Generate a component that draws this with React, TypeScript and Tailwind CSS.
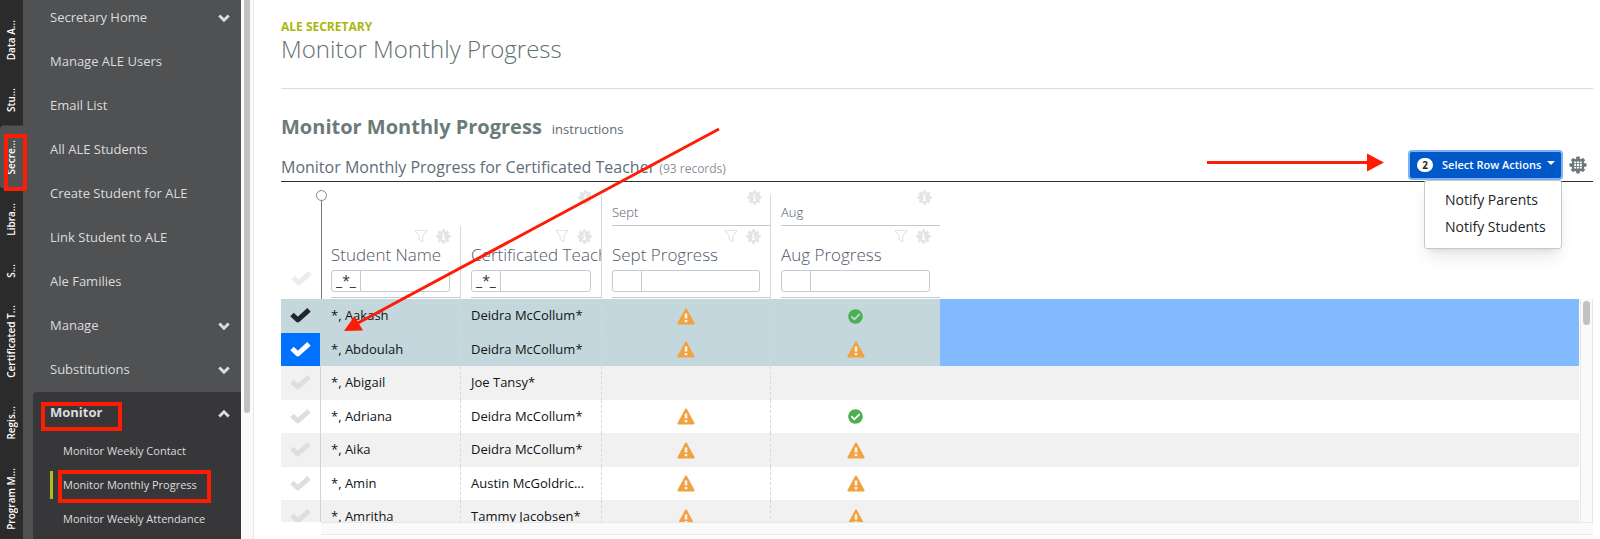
import React from "react";
import { FaCheckCircle } from "react-icons/fa";

type Status = "warn" | "ok" | "";

type Student = {
  name: string;
  teacher: string;
  sept: Status;
  aug: Status;
  selected?: boolean;
  active?: boolean;
};

const railTabs = [
  "Data A...",
  "Stu...",
  "Secre...",
  "Libra...",
  "S...",
  "Certificated T...",
  "Regis...",
  "Program M...",
];

const menuItems = [
  { label: "Secretary Home", expandable: true },
  { label: "Manage ALE Users" },
  { label: "Email List" },
  { label: "All ALE Students" },
  { label: "Create Student for ALE" },
  { label: "Link Student to ALE" },
  { label: "Ale Families" },
  { label: "Manage", expandable: true },
  { label: "Substitutions", expandable: true },
];

const monitorItems = [
  "Monitor Weekly Contact",
  "Monitor Monthly Progress",
  "Monitor Weekly Attendance",
];

const students: Student[] = [
  { name: "*, Aakash", teacher: "Deidra McCollum*", sept: "warn", aug: "ok", selected: true },
  { name: "*, Abdoulah", teacher: "Deidra McCollum*", sept: "warn", aug: "warn", selected: true, active: true },
  { name: "*, Abigail", teacher: "Joe Tansy*", sept: "", aug: "" },
  { name: "*, Adriana", teacher: "Deidra McCollum*", sept: "warn", aug: "ok" },
  { name: "*, Aika", teacher: "Deidra McCollum*", sept: "warn", aug: "warn" },
  { name: "*, Amin", teacher: "Austin McGoldric...", sept: "warn", aug: "warn" },
  { name: "*, Amritha", teacher: "Tammy Jacobsen*", sept: "warn", aug: "warn" },
];

const Check = ({ className }: { className: string }) => (
  <svg viewBox="0 0 21 16" className={`h-4 w-[21px] ${className}`} fill="none" stroke="currentColor" strokeWidth="5" strokeLinejoin="round" aria-hidden="true">
    <path d="M2 6.5 7.8 12 19 1.8" />
  </svg>
);

const Chevron = ({ up }: { up?: boolean }) => (
  <svg viewBox="0 0 12 9" className="h-[9px] w-3" fill="none" stroke="currentColor" strokeWidth="3" aria-hidden="true">
    <path d={up ? "M1.3 7.5 6 2.8 10.7 7.5" : "M1.3 1.5 6 6.2 10.7 1.5"} />
  </svg>
);

const Gear = ({ children, className }: { children: React.ReactNode; className: string }) => (
  <svg viewBox="0 0 18 18" className={className} fill="currentColor" aria-hidden="true">
    <circle cx="9" cy="9" r="6.6" />
    {[0, 45, 90, 135].map((angle) => (
      <rect key={angle} x="7.2" y="0.4" width="3.6" height="17.2" rx="0.8" transform={`rotate(${angle} 9 9)`} />
    ))}
    {children}
  </svg>
);

const InfoGear = () => (
  <Gear className="h-[15px] w-[15px] text-[#e3e5e7]">
    <path d="M7.2 7.6h2.7v4.2h.9v1.4H7.2v-1.4h.8V9h-.8z" fill="#fff" />
    <rect x="7.9" y="4.6" width="2" height="2" fill="#fff" />
  </Gear>
);

const GridGear = () => (
  <Gear className="h-[18px] w-[18px] text-[#6c777d]">
    <path
      d="M5.2 5.4h2v1.8h-2zM8 5.4h2v1.8H8zM10.800 5.400h2v1.800h-2zM5.2 8.1h2v1.8h-2zM8 8.1h2v1.8H8zM10.8 8.1h2v1.8h-2zM5.2 10.8h2v1.800h-2zM8 10.8h2v1.8H8zM10.8 10.8h2v1.8h-2z"
      fill="#fff"
    />
  </Gear>
);

const Funnel = () => (
  <svg viewBox="0 0 14 14" className="h-[14px] w-[14px]" fill="none" stroke="#e3e5e7" strokeWidth="1.2" strokeLinejoin="round" aria-hidden="true">
    <path d="M1 1.5h12L8.8 7v5.8L5.2 10.4V7z" />
  </svg>
);

const StatusIcon = ({ status }: { status: Status }) => {
  if (status === "ok") {
    return <FaCheckCircle className="mx-auto h-[15px] w-[15px] text-[#4caf50]" title="Complete" />;
  }
  if (status === "warn") {
    return (
      <svg viewBox="0 0 18 17" className="mx-auto h-[17px] w-[18px]" role="img" aria-label="Incomplete">
        <path d="M8.3.8q.7-1 1.4 0L17.5 15q.3 1.3-.8 1.4H1.3Q.2 16.3.5 15z" fill="#f0a243" />
        <path d="M7.7 5.6h2.6v5H7.7zM7.7 12h2.6v2.2H7.7z" fill="#fff" fillOpacity="0.85" />
      </svg>
    );
  }
  return null;
};

const ColumnHeader = ({ label, wildcard }: { label: string; wildcard?: boolean }) => (
  <th scope="col" className="h-[73px] overflow-hidden border-r border-[#d5d9dd] p-0 pl-[10px] align-top font-light last:border-r-0">
    <div className="h-[72px] border-b border-[#c3c8cd] pt-[3px]">
      <div className="flex justify-end gap-2 pr-[9px]">
        <Funnel />
        <InfoGear />
      </div>
      <div className="overflow-hidden text-[17px] leading-[22px] whitespace-nowrap text-[#4d5a68]">{label}</div>
      <div className="mt-1 mr-[10px] flex h-[22px] rounded-[3px] border border-[#c5cad3]">
        <button type="button" aria-label={`${label} match type`} className="w-[29px] border-r border-[#c5cad3] text-sm leading-5 font-normal text-[#333]">
          {wildcard ? "_*_" : ""}
        </button>
        <input type="text" aria-label={`Filter ${label}`} className="min-w-0 flex-1 px-1 text-xs outline-none" />
      </div>
    </div>
  </th>
);

const GroupHeader = ({ label, last }: { label?: string; last?: boolean }) => (
  <th scope="colgroup" className="h-11 p-0 pt-[13px] align-top font-light">
    <div className={`flex h-[31px] flex-col pl-[10px] ${last ? "" : "border-r border-[#d5d9dd]"}`}>
      <div className={`flex flex-1 flex-col ${label ? "border-b border-[#c3c8cd]" : ""}`}>
        <div className="-mt-[5px] flex justify-end pr-2">
          <InfoGear />
        </div>
        {label && <div className="text-left text-[13px] leading-[14px] text-[#4d5a68]">{label}</div>}
      </div>
    </div>
  </th>
);

const StudentRow = ({ student }: { student: Student }) => {
  const { name, teacher, sept, aug, selected, active } = student;
  const cell = "overflow-hidden border-r border-dashed border-[#d5d9dd] p-0 pl-[10px] whitespace-nowrap";
  const iconCell = "border-r border-dashed border-[#d5d9dd] p-0";
  const tick = active ? "text-white" : selected ? "text-[#212529]" : "text-[#dedede]";

  return (
    <tr className={`odd:h-[34px] even:h-[33px] ${selected ? "bg-[#c3d7dc]" : "odd:bg-[#f1f1f1] even:bg-white"}`}>
      <td className={`relative border-r border-[#d0d3d5] p-0 ${active ? "bg-[#0070ff]" : ""}`}>
        <label className="flex justify-center">
          <input type="checkbox" defaultChecked={selected} className="sr-only" aria-label={`Select ${name}`} />
          <Check className={tick} />
        </label>
      </td>
      <td className={cell}>{name}</td>
      <td className={cell}>{teacher}</td>
      <td className={iconCell}><StatusIcon status={sept} /></td>
      <td className="p-0"><StatusIcon status={aug} /></td>
      <td className={selected ? "bg-[#82baff] p-0" : "p-0"} />
    </tr>
  );
};

const Sidebar = () => (
  <aside className="flex shrink-0 overflow-hidden">
    {/* Vertical module tabs */}
    <nav aria-label="Modules" className="flex w-[23px] flex-col bg-[#2b2b2b] pt-[6px]">
      {railTabs.map((tab) => (
        <a
          key={tab}
          href="#"
          className={`flex w-[23px] shrink-0 rotate-180 items-center justify-center px-[14px] text-[10px] font-semibold whitespace-nowrap text-white [writing-mode:vertical-rl] ${
            tab === "Secre..." ? "rounded-r-sm bg-[#505153]" : ""
          }`}
        >
          {tab}
        </a>
      ))}
    </nav>

    {/* Module menu */}
    <nav aria-label="ALE Secretary" className="w-[218px] overflow-hidden bg-[#505153]">
      <ul className="-mt-1 text-[13px] text-[#dcdcdc]">
        {menuItems.map((item) => (
          <li key={item.label}>
            <a href="#" className="flex h-11 items-center justify-between pr-[11px] pl-[27px]">
              {item.label}
              {item.expandable && <Chevron />}
            </a>
          </li>
        ))}
        <li className="ml-[10px] h-screen rounded-tl bg-[#373739]">
          <a href="#" className="flex h-[42px] items-center justify-between pr-[11px] pl-[17px] font-bold">
            Monitor
            <Chevron up />
          </a>
          <ul className="text-[11px]">
            {monitorItems.map((label) => (
              <li key={label} className="flex h-[34px] items-center pl-[17px]">
                <a
                  href="#"
                  className={`flex h-7 items-center border-l-3 pl-[10px] ${
                    label === "Monitor Monthly Progress" ? "border-[#b0bb1e]" : "border-transparent"
                  }`}
                >
                  {label}
                </a>
              </li>
            ))}
          </ul>
        </li>
      </ul>
    </nav>

    <div className="w-[13px] border-r border-[#e8e8e8] bg-[#fafafa] px-[3px]">
      <div className="h-[413px] rounded-b-full bg-[#c1c1c1]" />
    </div>
  </aside>
);

const RowActions = () => (
  <div className="relative">
    <button type="button" className="flex h-[26px] w-[151px] items-center rounded-[2px] bg-[#0058c9] pr-[6px] pl-[7px] text-[11px] font-semibold whitespace-nowrap text-white ring-2 ring-[#7fb2f5]">
      <span className="mr-[9px] flex h-[14px] w-4 items-center justify-center rounded-full bg-white text-[10px] font-bold text-[#212529]">2</span>
      Select Row Actions
      <span className="mb-1 ml-auto border-x-4 border-t-4 border-x-transparent border-t-white" />
    </button>
    <ul className="absolute top-7 -right-px z-10 w-[138px] rounded-[3px] border border-[#c8c8c8] bg-white pt-[5px] pb-2 text-sm text-[#212529] shadow-lg">
      <li><a href="#" className="block pl-5 leading-[27px]">Notify Parents</a></li>
      <li><a href="#" className="block pl-5 leading-[27px]">Notify Students</a></li>
    </ul>
  </div>
);

/* Callouts drawn on top of the page */
const Callouts = () => (
  <svg className="pointer-events-none absolute top-0 left-0 z-20 h-full w-full" fill="none" stroke="#ff1c05" aria-hidden="true">
    <g strokeWidth="4">
      <rect x="6" y="136" width="19" height="53" />
      <rect x="43" y="404" width="77" height="25" />
      <rect x="60" y="472" width="149" height="29" />
    </g>
    <path d="M719 129 358 323M1207 162.5h162" strokeWidth="3" />
    <path d="M344 331 354.5 316 363 330.5zM1384 162.5l-17-9v18z" fill="#ff1c05" stroke="none" />
  </svg>
);

export default function App() {
  return (
    <div className="relative flex h-screen overflow-hidden bg-white font-['Open_Sans',sans-serif]">
      <Sidebar />

      <main className="flex min-w-0 flex-1 flex-col pr-[7px] pb-1 pl-[27px]">
        <header className="border-b border-[#dcdcdc] pt-[19px] pb-[25px]">
          <p className="text-xs leading-4 font-bold text-[#a8b710]">ALE SECRETARY</p>
          <h1 className="text-2xl leading-7 font-light text-[#61706f]">Monitor Monthly Progress</h1>
        </header>

        <div className="mt-6 flex items-baseline gap-[10px]">
          <h2 className="text-xl leading-7 font-bold text-[#6b7b7b]">Monitor Monthly Progress</h2>
          <a href="#" className="text-[13px] text-[#5d6b70]">instructions</a>
        </div>

        <div className="flex h-[41px] items-end justify-between border-b border-[#333] pb-[3px]">
          <h3 className="text-base leading-[22px] text-[#5f6d7a]">
            Monitor Monthly Progress for Certificated Teacher <small className="text-xs text-[#8b9299]">(93 records)</small>
          </h3>
          <div className="flex items-center gap-2 pr-[6px]">
            <RowActions />
            <button type="button" aria-label="Table settings"><GridGear /></button>
          </div>
        </div>

        <div className="flex min-h-0 flex-1">
          <div className="min-w-0 flex-1 overflow-hidden">
            <table className="w-full table-fixed border-separate border-spacing-0 text-left text-[13px] text-[#111417]">
              <colgroup>
                <col className="w-10" />
                <col className="w-[140px]" />
                <col className="w-[141px]" />
                <col className="w-[169px]" />
                <col className="w-[169px]" />
                <col />
              </colgroup>
              <thead>
                <tr>
                  <th rowSpan={2} className="relative p-0 pb-3 align-bottom">
                    <label className="flex justify-center">
                      <input type="checkbox" className="sr-only" aria-label="Select all" />
                      <Check className="text-[#ececee]" />
                    </label>
                    {/* Frozen column handle */}
                    <span className="absolute top-[18px] -right-px bottom-0 w-px bg-[#777d85]" />
                    <span className="absolute top-2 -right-[6px] h-[11px] w-[11px] rounded-full border border-[#7d8794] bg-white" />
                  </th>
                  <th className="h-11 p-0" />
                  <GroupHeader />
                  <GroupHeader label="Sept" />
                  <GroupHeader label="Aug" last />
                  <th rowSpan={2} className="p-0" />
                </tr>
                <tr>
                  <ColumnHeader label="Student Name" wildcard />
                  <ColumnHeader label="Certificated Teacher" wildcard />
                  <ColumnHeader label="Sept Progress" />
                  <ColumnHeader label="Aug Progress" />
                </tr>
              </thead>
              <tbody>
                {students.map((student) => (
                  <StudentRow key={student.name} student={student} />
                ))}
              </tbody>
            </table>
          </div>
          <div className="mt-[117px] ml-px w-[13px] border-x border-[#e6e6e6] bg-[#fafafa] px-[2px] pt-[2px]">
            <div className="h-6 rounded-full bg-[#c1c1c1]" />
          </div>
        </div>
        <div className="ml-10 h-[13px] shrink-0 border-y border-[#e8e8e8] bg-[#fafafa]" />
      </main>

      <Callouts />
    </div>
  );
}
